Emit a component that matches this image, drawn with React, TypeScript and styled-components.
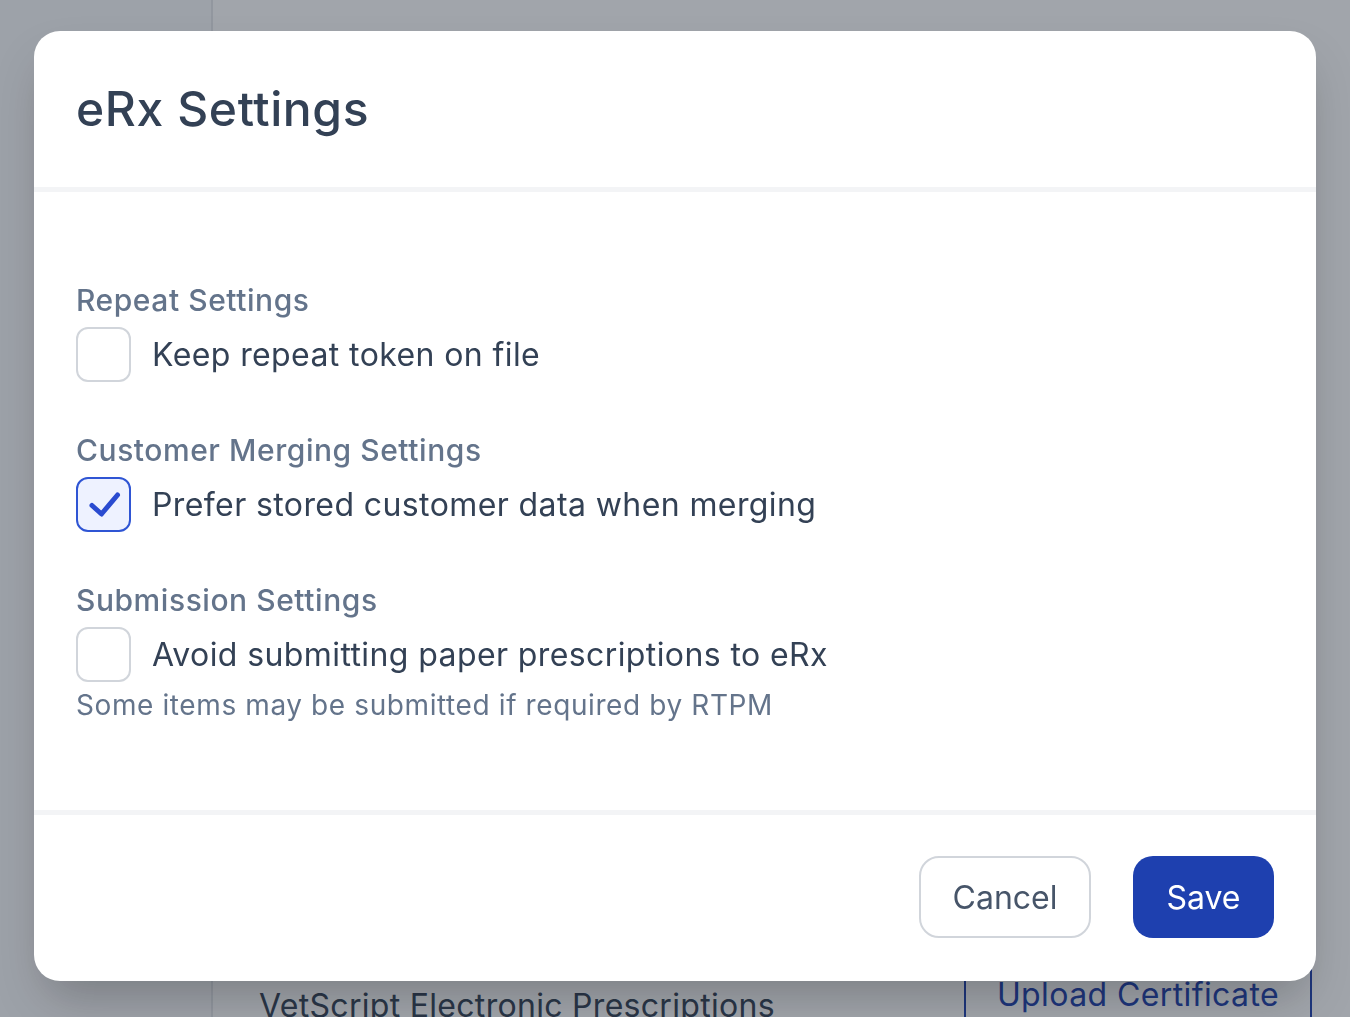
import React from "react";
import styled, { createGlobalStyle } from "styled-components";

const GlobalStyle = createGlobalStyle`
  html, body {
    margin: 0;
    padding: 0;
    height: 100%;
    overflow: hidden;
    font-family: Inter, "Noto Sans", sans-serif;
    -webkit-font-smoothing: antialiased;
  }
`;

type Setting = {
  title: string;
  label: string;
  checked: boolean;
  hint?: string;
};

const settings: Setting[] = [
  { title: "Repeat Settings", label: "Keep repeat token on file", checked: false },
  {
    title: "Customer Merging Settings",
    label: "Prefer stored customer data when merging",
    checked: true,
  },
  {
    title: "Submission Settings",
    label: "Avoid submitting paper prescriptions to eRx",
    checked: false,
    hint: "Some items may be submitted if required by RTPM",
  },
];

const App = () => {
  return (
    <>
      <GlobalStyle />
      <Page>
        <Sidebar />
        <Main>
          <ProviderRow>
            <ProviderInfo>
              <ProviderIcon viewBox="0 0 24 24">
                <path d="M6 9l6 5 6-5" />
              </ProviderIcon>
              <ProviderName>VetScript Electronic Prescriptions</ProviderName>
            </ProviderInfo>
            <OutlineButton>Upload Certificate</OutlineButton>
          </ProviderRow>
        </Main>
      </Page>

      <Backdrop>
        <Modal>
          <Header>
            <Title>eRx Settings</Title>
          </Header>

          <Body>
            {settings.map((s) => (
              <Section key={s.title}>
                <SectionTitle>{s.title}</SectionTitle>
                <CheckRow>
                  <Box $checked={s.checked}>
                    {s.checked && (
                      <svg width="55" height="55" viewBox="0 0 55 55">
                        <path
                          d="M16 28.5l9.5 8.5L41.5 18"
                          fill="none"
                          stroke="#2a4bd0"
                          strokeWidth="5"
                          strokeLinecap="round"
                          strokeLinejoin="round"
                        />
                      </svg>
                    )}
                  </Box>
                  <CheckLabel>{s.label}</CheckLabel>
                </CheckRow>
                {s.hint && <Hint>{s.hint}</Hint>}
              </Section>
            ))}
          </Body>

          <Footer>
            <CancelButton>Cancel</CancelButton>
            <SaveButton>Save</SaveButton>
          </Footer>
        </Modal>
      </Backdrop>
    </>
  );
};

export default App;

const Page = styled.div`
  display: flex;
  height: 100vh;
  background: #ffffff;
`;

const Sidebar = styled.div`
  width: 211px;
  flex-shrink: 0;
  border-right: 2px solid #e5e7eb;
  background: #f9fafb;
`;

const Main = styled.div`
  flex: 1;
  display: flex;
  flex-direction: column;
  padding: 0 38px 0 46px;
`;

const ProviderRow = styled.div`
  margin-top: 930px;
  display: flex;
  justify-content: space-between;
  align-items: flex-start;
`;

const ProviderInfo = styled.div`
  display: flex;
  flex-direction: column;
  padding-top: 26px;
`;

const ProviderIcon = styled.svg`
  width: 30px;
  height: 30px;
  margin-left: 26px;
  fill: none;
  stroke: #1e40af;
  stroke-width: 3;
  stroke-linecap: round;
  stroke-linejoin: round;
`;

const ProviderName = styled.div`
  font-size: 32px;
  line-height: 40px;
  letter-spacing: 0.3px;
  color: #334155;
`;

const OutlineButton = styled.button`
  margin-top: 10px;
  width: 348px;
  height: 110px;
  border: 2px solid #1e40af;
  border-radius: 20px;
  background: #ffffff;
  color: #1e40af;
  font-family: inherit;
  font-size: 32px;
  letter-spacing: 0.4px;
  padding-top: 0;
`;

const Backdrop = styled.div`
  position: fixed;
  inset: 0;
  background: rgba(31, 41, 55, 0.42);
  display: flex;
  justify-content: center;
  padding-top: 31px;
`;

const Modal = styled.div`
  width: 1282px;
  height: 950px;
  background: #ffffff;
  border-radius: 26px;
  display: flex;
  flex-direction: column;
  overflow: hidden;
  box-shadow: 0 25px 50px -12px rgba(0, 0, 0, 0.25);
`;

const Header = styled.div`
  padding: 42px 42px;
  border-bottom: 5px solid #f3f4f6;
`;

const Title = styled.h2`
  margin: 0;
  font-size: 48px;
  line-height: 72px;
  font-weight: 500;
  letter-spacing: 0.6px;
  color: #334155;
`;

const Body = styled.div`
  flex: 1;
  display: flex;
  flex-direction: column;
  gap: 48px;
  padding: 88px 42px 0;
`;

const Section = styled.div`
  display: flex;
  flex-direction: column;
`;

const SectionTitle = styled.div`
  font-size: 30px;
  line-height: 40px;
  font-weight: 500;
  letter-spacing: 0.55px;
  color: #64748b;
  margin-bottom: 7px;
`;

const CheckRow = styled.label`
  display: flex;
  align-items: center;
  gap: 21px;
`;

const Box = styled.span<{ $checked: boolean }>`
  width: 55px;
  height: 55px;
  box-sizing: border-box;
  border-radius: 12px;
  border: 2px solid ${(p) => (p.$checked ? "#2f55d4" : "#d1d5db")};
  background: ${(p) => (p.$checked ? "#eef2ff" : "#ffffff")};
  display: flex;
  align-items: center;
  justify-content: center;
  flex-shrink: 0;
  svg {
    margin: -2px;
  }
`;

const CheckLabel = styled.span`
  font-size: 32px;
  line-height: 55px;
  letter-spacing: 0.4px;
  color: #334155;
`;

const Hint = styled.div`
  margin-top: 3px;
  font-size: 28px;
  line-height: 40px;
  letter-spacing: 0.6px;
  color: #64748b;
`;

const Footer = styled.div`
  border-top: 5px solid #f3f4f6;
  padding: 41px 42px 43px;
  display: flex;
  justify-content: flex-end;
  gap: 42px;
`;

const BaseButton = styled.button`
  height: 82px;
  border-radius: 20px;
  font-family: inherit;
  font-size: 32px;
  cursor: pointer;
`;

const CancelButton = styled(BaseButton)`
  width: 172px;
  background: #ffffff;
  border: 2px solid #d1d5db;
  color: #475569;
`;

const SaveButton = styled(BaseButton)`
  width: 141px;
  background: #1e40af;
  border: none;
  color: #ffffff;
`;
